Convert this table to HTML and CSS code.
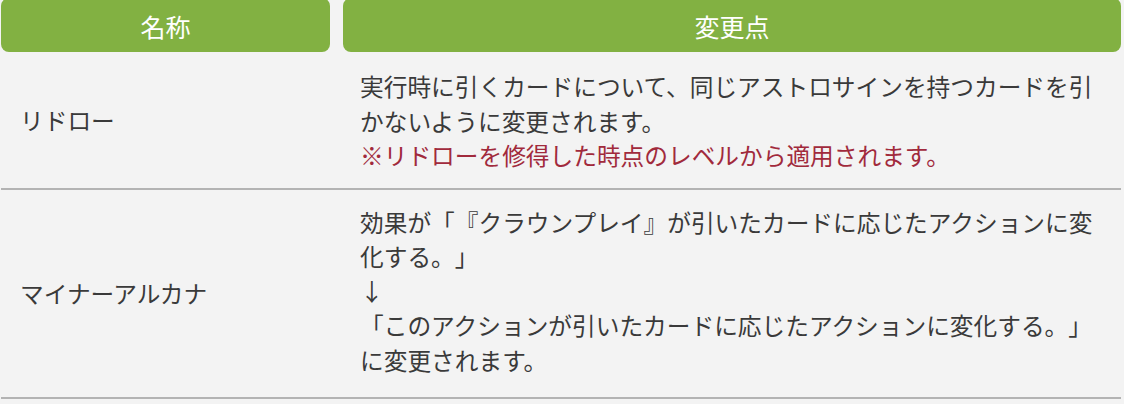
FILE: index.html
```html
<!DOCTYPE html>
<html lang="ja">
<head>
<meta charset="utf-8">
<title>変更点</title>
<link rel="stylesheet" href="styles.css">
</head>
<body>
<div class="table">
  <div class="head">
    <div class="hcell">名称</div>
    <div class="hcell">変更点</div>
  </div>
  <div class="row row-first">
    <div class="name">リドロー</div>
    <div class="desc">実行時に引くカードについて、同じアストロサインを持つカードを引かないように変更されます。<br><span class="note">※リドローを修得した時点のレベルから適用されます。</span></div>
  </div>
  <div class="row row-second">
    <div class="name">マイナーアルカナ</div>
    <div class="desc">効果が「『クラウンプレイ』が引いたカードに応じたアクションに変化する。」<br>↓<br>「このアクションが引いたカードに応じたアクションに変化する。」<br>に変更されます。</div>
  </div>
</div>
</body>
</html>
```

FILE: styles.css
```css
html, body {
  margin: 0;
  padding: 0;
  background: #f3f3f3;
}
body {
  font-family: "Noto Sans CJK JP", "Noto Sans", sans-serif;
  color: #3a3a3a;
  text-spacing-trim: space-all;
  font-feature-settings: "palt" 0, "halt" 0, "chws" 0;
}
.table {
  width: 1120px;
  margin-left: 1px;
}
.head {
  display: grid;
  grid-template-columns: 329px 778px;
  column-gap: 13px;
  margin-top: -2px;
}
.hcell {
  background: #82b142;
  color: #ffffff;
  border-radius: 8px;
  height: 54px;
  display: flex;
  align-items: center;
  justify-content: center;
  font-size: 25px;
  font-weight: 400;
  padding-top: 2px;
  box-sizing: border-box;
}
.row {
  display: grid;
  grid-template-columns: 342px 778px;
  border-bottom: 2px solid #b3b3b3;
}
.name {
  display: flex;
  align-items: center;
  padding-left: 19px;
  font-size: 23.7px;
}
.desc {
  padding: 16px 17px 16px 17px;
  font-size: 23.7px;
  line-height: 34.5px;
}
.row-first .desc {
  padding-top: 17px;
  padding-bottom: 15px;
}
.row-second .desc {
  padding-top: 15px;
  padding-bottom: 20px;
}
.note {
  color: #a12a3c;
}
```
